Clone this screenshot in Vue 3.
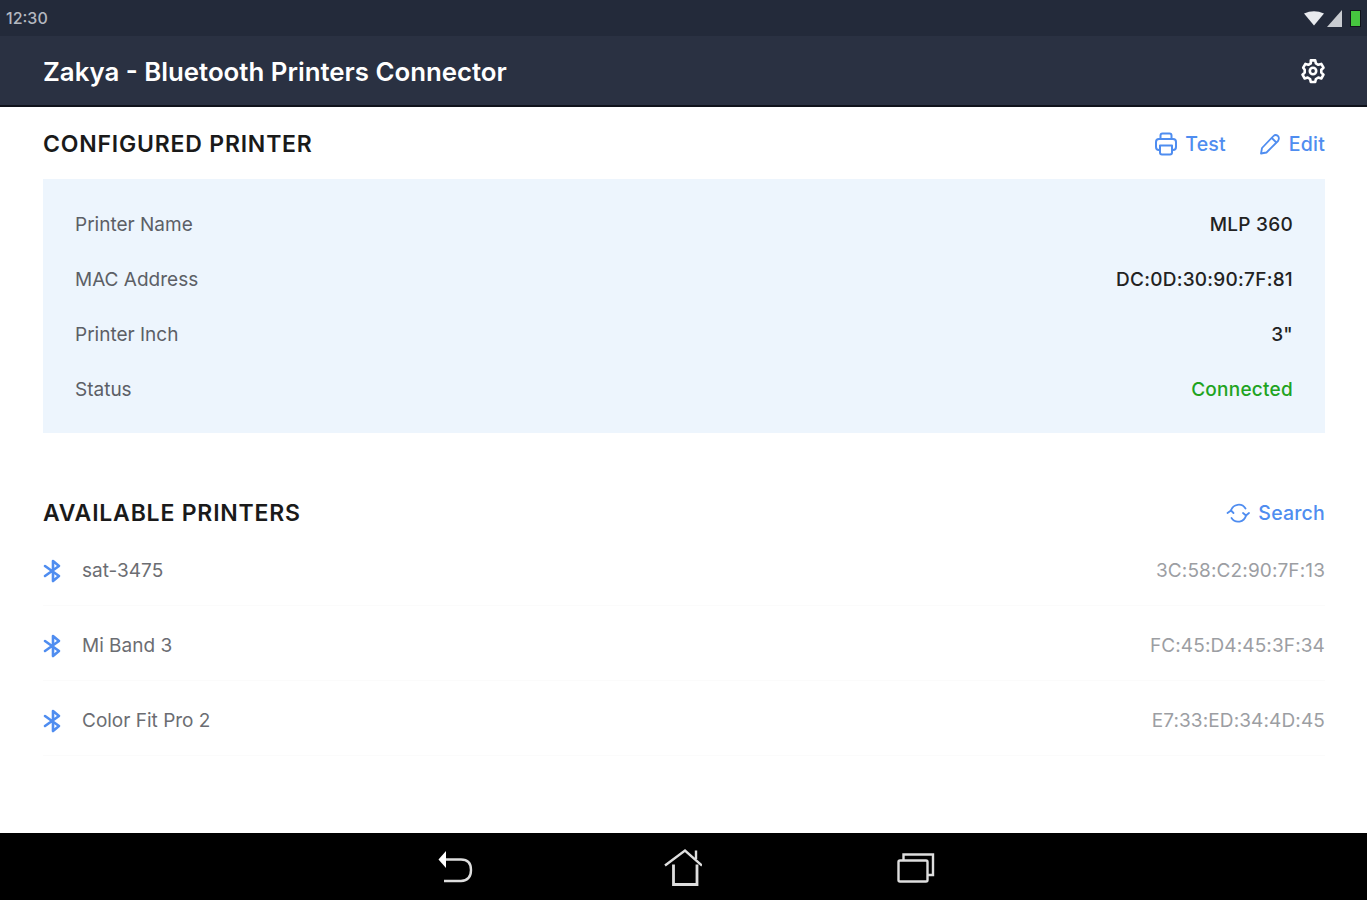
<script setup>
const details = [
  { label: "Printer Name", value: "MLP 360" },
  { label: "MAC Address", value: "DC:0D:30:90:7F:81" },
  { label: "Printer Inch", value: '3"' },
  { label: "Status", value: "Connected", ok: true },
];

const printers = [
  { name: "sat-3475", mac: "3C:58:C2:90:7F:13" },
  { name: "Mi Band 3", mac: "FC:45:D4:45:3F:34" },
  { name: "Color Fit Pro 2", mac: "E7:33:ED:34:4D:45" },
];
</script>

<template>
  <div class="screen">
    <div class="status-bar">
      <span class="clock">12:30</span>
      <div class="status-icons">
        <svg width="20" height="15" viewBox="0 0 20 15"><path d="M0 2.500Q10 -2 20 2.500L10 14.500Z" fill="#e8eaee" /></svg>
        <svg width="15" height="17" viewBox="0 0 15 17"><path d="M15 0V17H0Z" fill="#c9ccd1" /></svg>
        <span class="battery"></span>
      </div>
    </div>

    <header class="app-bar">
      <h1>Zakya - Bluetooth Printers Connector</h1>
      <svg width="28" height="28" viewBox="0 0 28 28" fill="none" stroke="#fff" stroke-width="2.600" stroke-linejoin="round">
        <path d="M11.800 3.400h4.400l.7 3 2.400 1.400 3-.9 2.200 3.800-2.200 2.100v2.800l2.200 2.100-2.200 3.800-3-.9-2.400 1.400-.7 3h-4.400l-.7-3-2.400-1.400-3 .9-2.200-3.800 2.200-2.100v-2.800L4.200 10.700l2.200-3.800 3 .9 2.400-1.400z" />
        <circle cx="14" cy="14" r="3.200" />
      </svg>
    </header>

    <main class="content">
      <section class="configured">
        <div class="section-head">
          <h2>CONFIGURED PRINTER</h2>
          <div class="actions">
            <a class="action">
              <svg width="22" height="24" viewBox="0 0 22 24" fill="none" stroke="#4f8df0" stroke-width="2" stroke-linejoin="round" stroke-linecap="round">
                <path d="M5.500 7V3.500Q5.500 1.500 7.500 1.500h7Q16.500 1.500 16.500 3.500V7" />
                <path d="M5 18H4Q1 18 1 15v-5Q1 7 4 7h14Q21 7 21 10v5Q21 18 18 18H17" />
                <path d="M5 13.500h12v7Q17 22.500 15 22.500H7Q5 22.500 5 20.500z" />
              </svg>
              Test
            </a>
            <a class="action">
              <svg width="22" height="22" viewBox="0 0 22 22" fill="none" stroke="#4f8df0" stroke-width="1.800" stroke-linejoin="round">
                <path d="M2 20.500l1-5.500L14.500 3Q16.500 1 18.700 2.800T19 8L7.500 19.500z" />
                <path d="M12.800 5l4.500 4.500" />
              </svg>
              Edit
            </a>
          </div>
        </div>
        <dl class="details">
          <div v-for="row in details" :key="row.label" class="detail-row">
            <dt>{{ row.label }}</dt>
            <dd :class="{ connected: row.ok }">{{ row.value }}</dd>
          </div>
        </dl>
      </section>

      <section class="available">
        <div class="section-head">
          <h2>AVAILABLE PRINTERS</h2>
          <a class="action">
            <svg width="24" height="22" viewBox="0 0 24 22" fill="none" stroke="#4f8df0" stroke-width="1.800" stroke-linecap="round">
              <path d="M5 8.500A8 8 0 0 1 19.500 6.500" />
              <path d="M20 13.500A8 8 0 0 1 5.500 16" />
              <path d="M1.500 11L5 8.500 7.500 11" stroke-linejoin="round" />
              <path d="M17 11L20 13.500 23 11" stroke-linejoin="round" />
            </svg>
            Search
          </a>
        </div>
        <ul class="printer-list">
          <li v-for="p in printers" :key="p.mac">
            <svg width="20" height="24" viewBox="0 0 20 24" fill="none" stroke="#4f8df0" stroke-width="2.600" stroke-linejoin="round" stroke-linecap="round">
              <path d="M2 7l14 10-6 5V2l6 5L2 17" />
            </svg>
            <span class="name">{{ p.name }}</span>
            <span class="mac">{{ p.mac }}</span>
          </li>
        </ul>
      </section>
    </main>

    <nav class="nav-bar">
      <svg class="back" width="36" height="34" viewBox="0 0 36 34" fill="none" stroke="#dedede" stroke-width="2.400">
        <path d="M8 9.500H24Q34 9.500 34 20T24 31H7" />
        <path d="M1.500 9.500L9 1V18z" fill="#fff" stroke="none" />
      </svg>
      <svg width="38" height="38" viewBox="0 0 38 38" fill="none" stroke="#dedede" stroke-width="2.400">
        <path d="M1 17.500L21 2.500 38 17.500" />
        <path d="M32 2.500V11" />
        <path d="M9.500 16.500V36.500H33V16.500" stroke-width="2.800" />
      </svg>
      <svg width="38" height="32" viewBox="0 0 38 32" fill="none" stroke="#dedede" stroke-width="2.400">
        <path d="M6.500 9V3.500H36V24H31" />
        <rect x="1.500" y="9.500" width="29" height="21" rx="1.500" />
      </svg>
    </nav>
  </div>
</template>

<style>
body {
  background: #fff;
}
</style>

<style scoped>
.screen {
  width: 1367px;
  height: 900px;
  display: flex;
  flex-direction: column;
  font-family: Inter, "Liberation Sans", sans-serif;
  overflow: hidden;
}

.status-bar {
  height: 36px;
  background: #232a3a;
  display: flex;
  align-items: center;
  justify-content: space-between;
  padding: 0 7px 0 6px;
}

.clock {
  color: #b4b8c0;
  font-size: 16px;
  font-weight: 500;
}

.status-icons {
  display: flex;
  align-items: center;
  gap: 3px;
}

.battery {
  width: 9px;
  height: 15px;
  background: #46c53f;
  box-shadow: 0 0 0 1px #10131c;
  margin-left: 6px;
}

.app-bar {
  height: 71px;
  background: #2a3142;
  border-bottom: 2px solid #10131c;
  box-sizing: border-box;
  display: flex;
  align-items: center;
  justify-content: space-between;
  padding: 1px 40px 0 43px;
  flex-shrink: 0;
}

.app-bar h1 {
  margin: 0;
  color: #fff;
  font-size: 25.800px;
  font-weight: 600;
}

.content {
  flex: 1;
  background: #fff;
  padding: 0 42px 0 43px;
}

.section-head {
  display: flex;
  align-items: center;
  justify-content: space-between;
  height: 72px;
  padding-top: 1px;
  box-sizing: border-box;
}

h2 {
  margin: 0;
  color: #1a1a1a;
  font-size: 23px;
  font-weight: 600;
  letter-spacing: 0.8px;
}

.actions {
  display: flex;
  gap: 33px;
}

.action {
  display: flex;
  align-items: center;
  gap: 8px;
  color: #4f8df0;
  font-size: 19.500px;
  font-weight: 500;
  letter-spacing: 0.2px;
}

.details {
  margin: 0;
  height: 254px;
  box-sizing: border-box;
  padding: 18px 32px 16px;
  background: #edf5fd;
}

.detail-row {
  height: 55px;
  display: flex;
  align-items: center;
  justify-content: space-between;
  font-size: 19px;
}

dt {
  color: #5c5f66;
}

dd {
  margin: 0;
  color: #222;
  font-weight: 500;
  letter-spacing: 0.25px;
}

dd.connected {
  color: #21a321;
}

.available {
  margin-top: 43px;
}

.printer-list {
  list-style: none;
  margin: -17px 0 0;
  padding: 0;
}

.printer-list li {
  height: 75px;
  padding-top: 5px;
  display: flex;
  align-items: center;
  font-size: 19px;
  border-bottom: 1px solid #fbfbfb;
  box-sizing: border-box;
}

.printer-list svg {
  margin-right: 19px;
}

.name {
  color: #6b6d72;
  flex: 1;
}

.mac {
  color: #9c9ea3;
  letter-spacing: 0.12px;
}

.nav-bar {
  height: 67px;
  background: #000;
  flex-shrink: 0;
  display: flex;
  align-items: center;
  justify-content: center;
  gap: 195px;
  padding-left: 5px;
}

.back {
  margin-right: -4px;
}
</style>
